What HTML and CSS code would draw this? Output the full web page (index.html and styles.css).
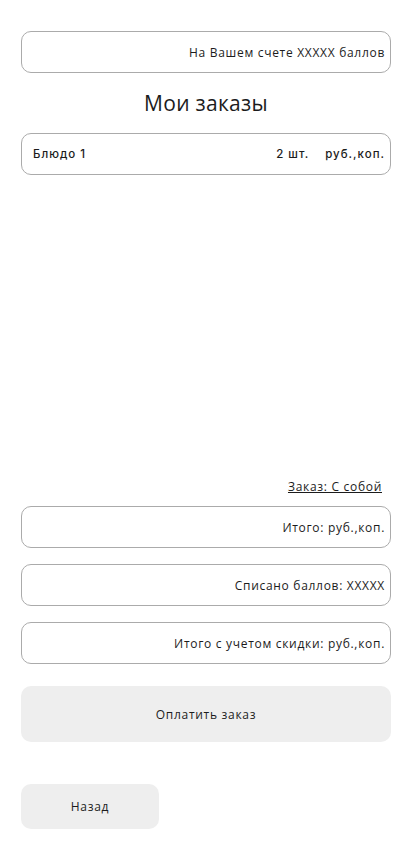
FILE: index.html
```html
<!DOCTYPE html>
<html lang="ru">
<head>
<meta charset="utf-8">
<title>Мои заказы</title>
<link rel="stylesheet" href="styles.css">
</head>
<body>
<main class="page">
  <div class="box box-right">На Вашем счете XXXXX баллов</div>
  <h1 class="title">Мои заказы</h1>
  <div class="list">
    <div class="box item">
      <span class="item-name">Блюдо 1</span>
      <span class="item-qty">2 шт.</span>
      <span class="item-price">руб.,коп.</span>
    </div>
  </div>
  <div class="order-type"><a class="order-link" href="#">Заказ: С собой</a></div>
  <div class="totals">
    <div class="box box-right">Итого: руб.,коп.</div>
    <div class="box box-right">Списано баллов: XXXXX</div>
    <div class="box box-right">Итого с учетом скидки: руб.,коп.</div>
  </div>
  <button class="btn btn-pay">Оплатить заказ</button>
  <button class="btn btn-back">Назад</button>
</main>
</body>
</html>
```
FILE: styles.css
```css
* { box-sizing: border-box; }
html, body { margin: 0; padding: 0; background: #fff; }
body {
  font-family: "Open Sans", "Noto Sans", sans-serif;
  color: #1c1c1c;
  font-size: 12px;
  letter-spacing: 0.7px;
}
.page {
  width: 370px;
  margin-left: 21px;
  padding-top: 31px;
  display: flex;
  flex-direction: column;
}
.box {
  height: 42px;
  border: 1px solid #ababab;
  border-radius: 10px;
  display: flex;
  align-items: center;
  padding: 0 5px 0 11px;
  background: #fff;
}
.box-right { justify-content: flex-end; }
.title {
  margin: 0;
  height: 60px;
  line-height: 60px;
  text-align: center;
  font-weight: 400;
  font-size: 21px;
  letter-spacing: 0.3px;
}
.list { height: 345px; }
.item {
  font-family: Inter, Roboto, sans-serif;
  font-size: 11.5px;
  font-weight: 500;
  letter-spacing: 1px;
  padding-right: 5px;
}
.item-name { flex: 1; }
.item-qty { margin-right: 16px; }
.order-type {
  height: 28px;
  display: flex;
  justify-content: flex-end;
  align-items: flex-start;
  padding-right: 9px;
}
.order-link {
  color: #1c1c1c;
  text-decoration: underline;
  line-height: 18px;
}
.totals {
  display: flex;
  flex-direction: column;
  gap: 16px;
}
.btn {
  font-family: "Open Sans", "Noto Sans", sans-serif;
  font-size: 12px;
  letter-spacing: 0.7px;
  color: #1c1c1c;
  background: #eeeeee;
  border: none;
  border-radius: 10px;
  padding: 0;
}
.btn-pay {
  margin-top: 22px;
  height: 56px;
  width: 100%;
}
.btn-back {
  margin-top: 42px;
  height: 45px;
  width: 138px;
}
```
